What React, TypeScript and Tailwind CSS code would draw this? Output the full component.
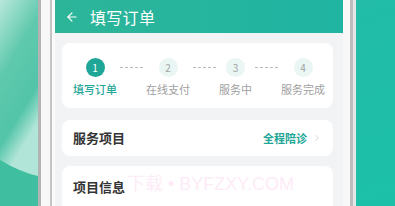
import React from "react";
import { ArrowLeft, ChevronRight } from "lucide-react";

const steps = [
  { n: "1", label: "填写订单", active: true },
  { n: "2", label: "在线支付" },
  { n: "3", label: "服务中" },
  { n: "4", label: "服务完成" },
];

function Step({ n, label, active }: { n: string; label: string; active?: boolean }) {
  return (
    <div className="flex flex-col items-center shrink-0">
      <div
        className={
          active
            ? "w-[19px] h-[19px] rounded-full bg-[#1fa697] text-white flex items-center justify-center text-[10px]"
            : "w-[19px] h-[19px] rounded-full bg-[#eaf6f3] text-[#a3a3a3] flex items-center justify-center text-[10px]"
        }
      >
        {n}
      </div>
      <p
        className={
          active
            ? "mt-[5px] text-[11px] leading-[14px] font-medium text-[#1fa697]"
            : "mt-[5px] text-[11px] leading-[14px] text-[#a0a0a0]"
        }
      >
        {label}
      </p>
    </div>
  );
}

function Dash() {
  return <div className="flex-1 mx-[3px] mt-[9px] self-start border-t border-dashed border-[#b9b9b9] h-0" />;
}

export default function App() {
  return (
    <div
      className="w-[395px] h-[206px] overflow-hidden flex"
      style={{ fontFamily: '"Noto Sans CJK SC", "Noto Sans", sans-serif' }}
    >
      {/* left backdrop */}
      <div className="w-[38px] h-full shrink-0">
        <svg width="38" height="206" viewBox="0 0 38 206">
          <defs>
            <linearGradient id="lg" x1="0" y1="0" x2="0.3" y2="1">
              <stop offset="0" stopColor="#b8e7da" />
              <stop offset="0.35" stopColor="#5fc9ad" />
              <stop offset="0.65" stopColor="#52c4a8" />
              <stop offset="0.82" stopColor="#b0e5d7" />
            </linearGradient>
          </defs>
          <rect width="38" height="206" fill="url(#lg)" />
          <path d="M0 160 Q20 172 38 176 L38 206 L0 206 Z" fill="#3fbf9f" />
        </svg>
      </div>

      {/* left bezel */}
      <div className="w-[17px] h-full shrink-0 flex bg-[#f4f4f4]">
        <div className="w-[3px] bg-[#b3b3b3]" />
        <div className="w-[9px] bg-[#f7f7f7]" />
        <div className="w-[2px] bg-[#c4c4c4]" />
        <div className="flex-1 bg-[#fafafa]" />
      </div>

      {/* screen */}
      <div className="w-[288px] h-full shrink-0 flex flex-col bg-[#f2f3f5] relative">
        <div className="h-[33px] shrink-0 flex items-center px-[10px] bg-[linear-gradient(90deg,#2db599,#1fb4a2)]">
          <ArrowLeft className="w-[14px] h-[14px] text-white" strokeWidth={2} />
          <span className="ml-[11px] text-[16px] text-white tracking-[0.3px]">填写订单</span>
        </div>

        <div className="pl-[7px] pr-[10px] pt-[10px] flex flex-col">
          <div className="h-[65px] bg-white rounded-[8px] pl-[11px] pr-[8px] pt-[15px] flex">
            {steps.map((s, i) => (
              <React.Fragment key={s.n}>
                {i > 0 && <Dash />}
                <Step {...s} />
              </React.Fragment>
            ))}
          </div>

          <div className="mt-[12px] h-[36px] bg-white rounded-[8px] pl-[11px] pr-[11px] flex items-center justify-between">
            <span className="text-[13px] font-bold text-[#333]">服务项目</span>
            <div className="flex items-center gap-[5px]">
              <span className="text-[11px] font-bold text-[#1fa697]">全程陪诊</span>
              <ChevronRight className="w-[10px] h-[10px] text-[#cfcfcf]" strokeWidth={2} />
            </div>
          </div>

          <div className="mt-[10px] h-[60px] bg-white rounded-t-[8px] pl-[11px] pt-[7px]">
            <span className="text-[13px] font-bold text-[#333]">项目信息</span>
          </div>
        </div>

        <div className="absolute left-[72px] top-[172px] text-[18px] leading-[24px] text-[#fdecf7] whitespace-nowrap" style={{ fontFamily: '"Liberation Sans", "Noto Sans CJK SC", sans-serif' }}>
          下载 • BYFZXY.COM
        </div>
      </div>

      {/* right bezel */}
      <div className="w-[13px] h-full shrink-0 flex">
        <div className="w-[7px] bg-[#f8f8f8]" />
        <div className="w-[3px] bg-[#bdbdbd]" />
        <div className="w-[3px] bg-[#e6e6e6]" />
      </div>

      {/* right backdrop */}
      <div className="flex-1 h-full bg-[linear-gradient(160deg,#22bca8,#1cc0a8)]" />
    </div>
  );
}
